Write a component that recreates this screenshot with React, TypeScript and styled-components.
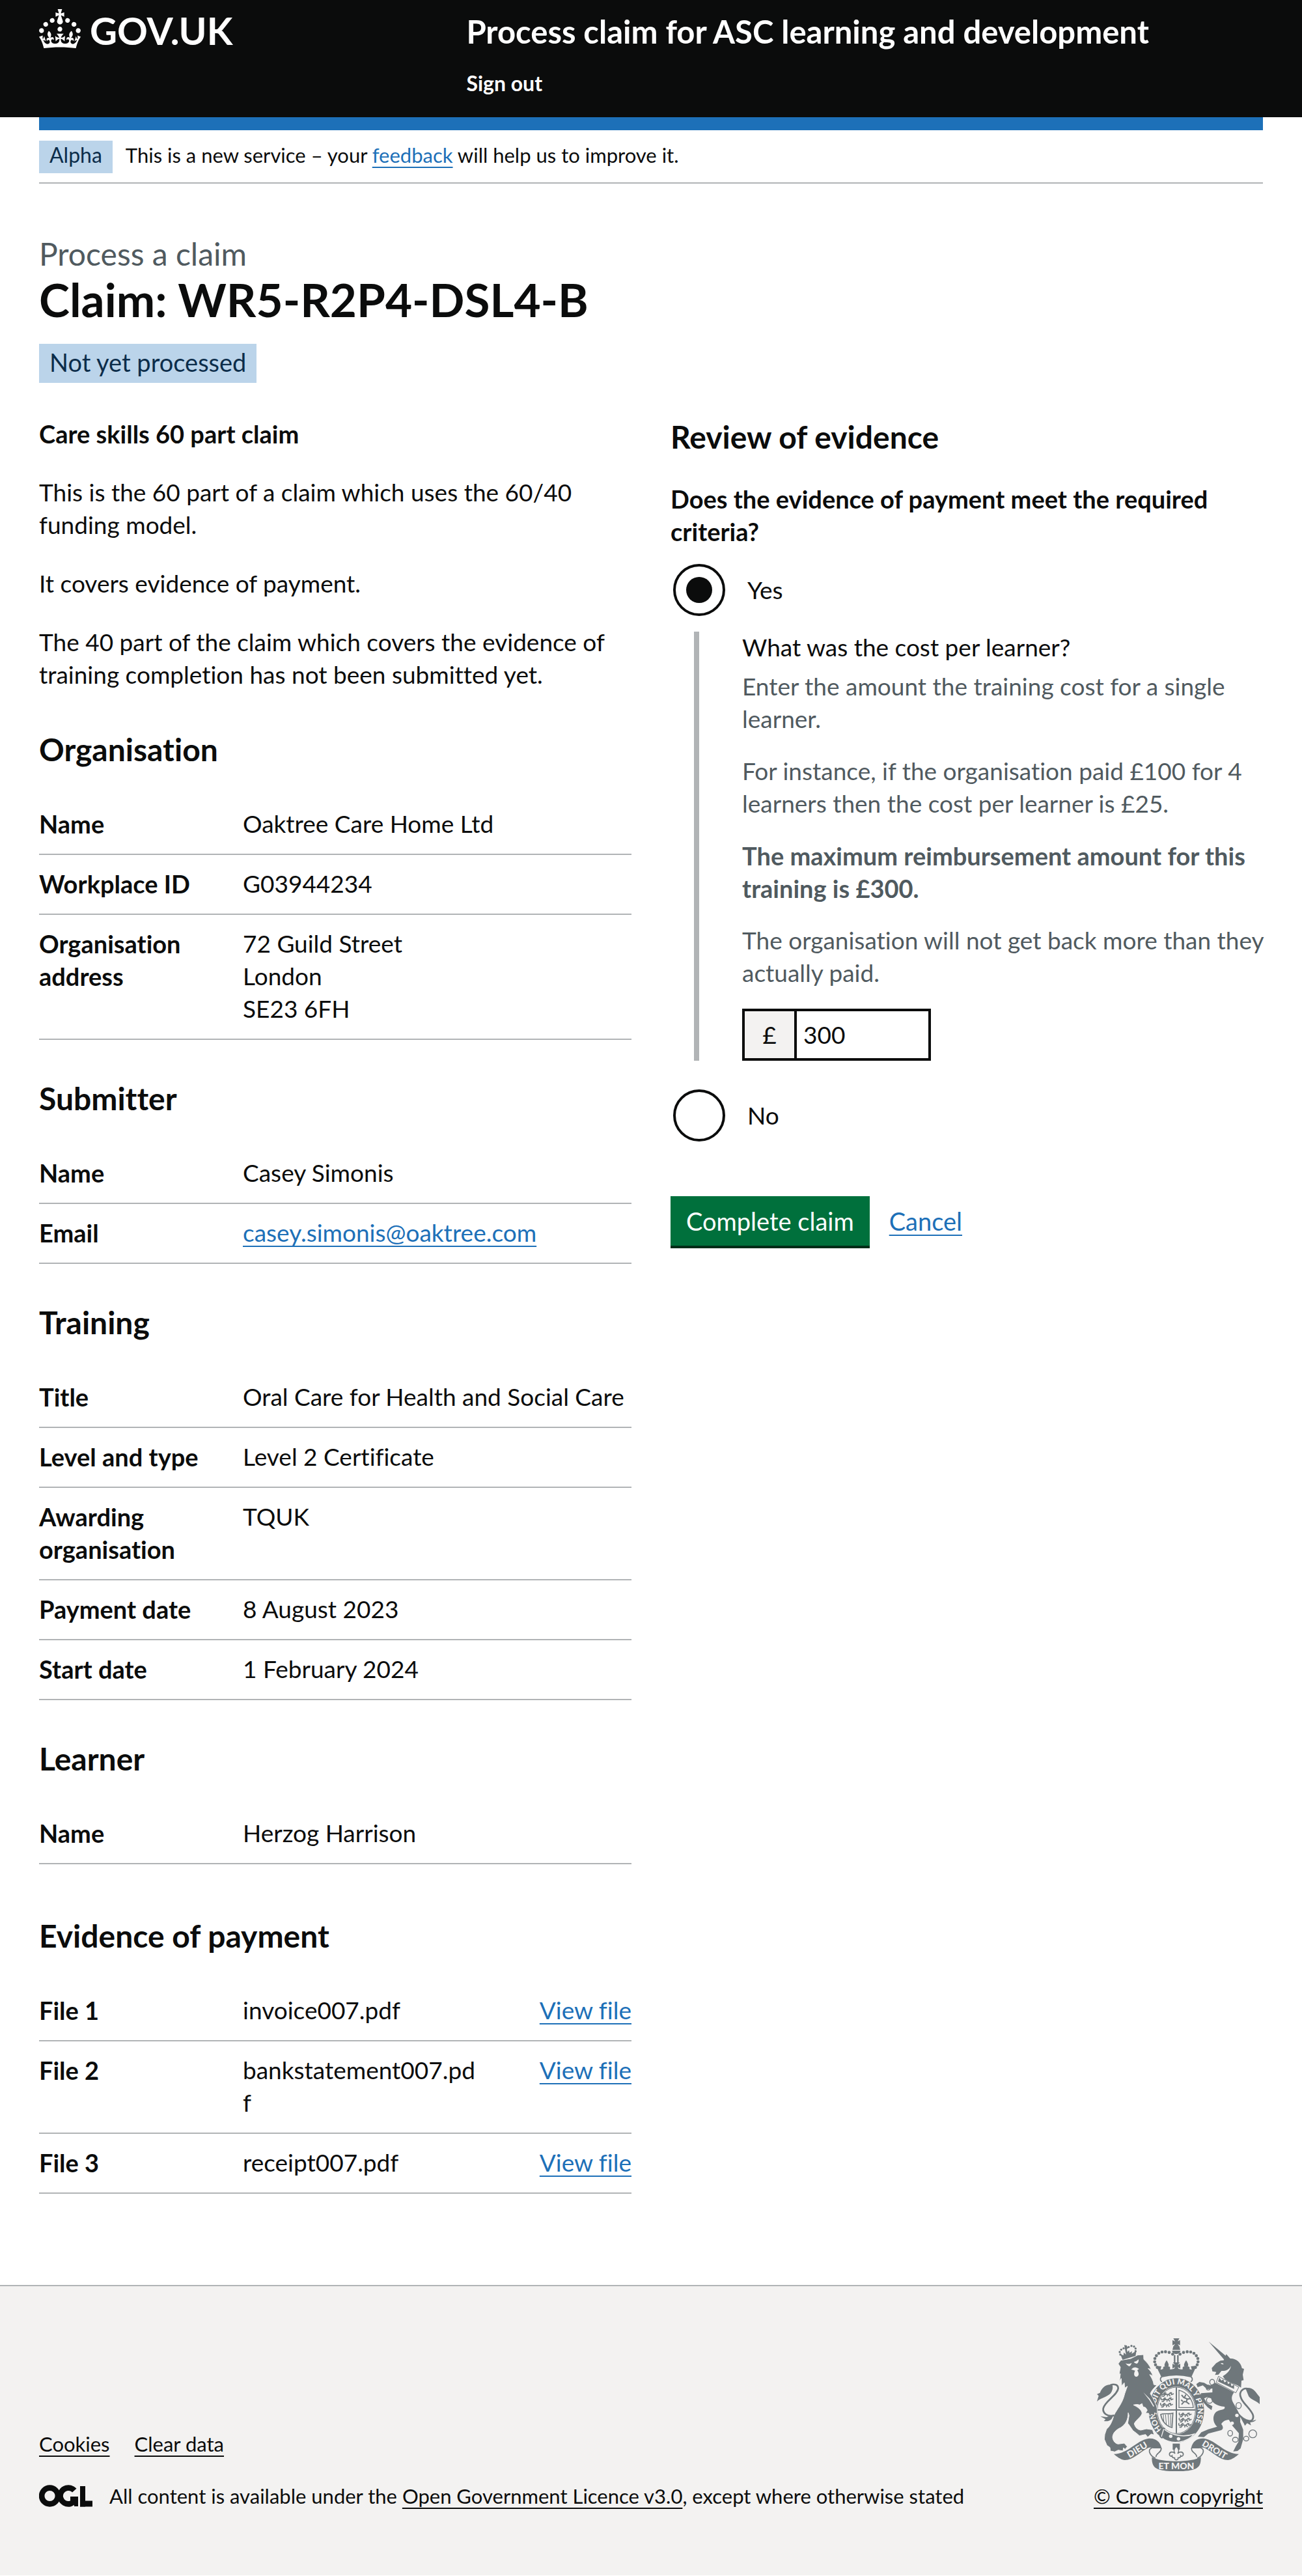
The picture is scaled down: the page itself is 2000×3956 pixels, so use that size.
import React, { useState } from 'react';
import styled, { createGlobalStyle } from 'styled-components';

const color = {
  text: '#0b0c0c',
  secondary: '#505a5f',
  border: '#b1b4b6',
  link: '#1d70b8',
  tagBg: '#bbd4ea',
  tagText: '#0c2d4a',
  panel: '#f3f2f1',
  crest: '#6f777b',
  green: '#00703c',
  greenDark: '#002d18',
  white: '#ffffff',
};

const GlobalStyle = createGlobalStyle`
  * {
    box-sizing: border-box;
  }
  body {
    margin: 0;
    background: ${color.white};
    color: ${color.text};
    font-family: Lato, 'Liberation Sans', sans-serif;
    font-size: 37px;
    line-height: 50px;
    font-variant-ligatures: none;
  }
  button,
  input {
    font: inherit;
    color: inherit;
  }
`;

const Container = styled.div`
  margin: 0 60px;
`;

const Link = styled.a`
  color: ${color.link};
  text-decoration: underline;
  text-decoration-thickness: 2px;
  text-underline-offset: 6px;
  text-decoration-skip-ink: none;
`;

const HeaderBar = styled.header`
  background: ${color.text};
  color: ${color.white};
`;

const HeaderRow = styled(Container)`
  display: flex;
  gap: 36px;
  padding: 14px 0 32px;
`;

const LogoLink = styled.a`
  display: flex;
  flex: 0 0 33%;
  gap: 14px;
  align-self: flex-start;
  align-items: flex-start;
  color: ${color.white};
  font-size: 58px;
  font-weight: 700;
  line-height: 66px;
  text-decoration: none;

  svg {
    display: block;
  }
`;

const ServiceNav = styled.div`
  padding-top: 4px;
`;

const ServiceName = styled.a`
  display: block;
  color: ${color.white};
  font-size: 49px;
  font-weight: 700;
  line-height: 60px;
  text-decoration: none;
`;

const SignOut = styled.a`
  display: block;
  margin-top: 30px;
  color: ${color.white};
  font-size: 32px;
  font-weight: 700;
  line-height: 40px;
  text-decoration: none;
`;

const BlueBar = styled(Container)`
  height: 20px;
  background: ${color.link};
`;

const PhaseBanner = styled(Container)`
  display: flex;
  align-items: baseline;
  gap: 20px;
  padding: 16px 0 14px;
  border-bottom: 2px solid ${color.border};
  font-size: 31px;
  line-height: 40px;
`;

const Tag = styled.strong<{ $small?: boolean }>`
  display: inline-block;
  padding: ${p => (p.$small ? '2px 16px 8px' : '3px 16px 7px')};
  background: ${color.tagBg};
  color: ${color.tagText};
  font-size: ${p => (p.$small ? '32px' : '38px')};
  font-weight: 400;
`;

const Main = styled(Container).attrs({ as: 'main' })`
  padding: 78px 0 140px;
`;

const Caption = styled.span`
  display: block;
  color: ${color.secondary};
  font-size: 48px;
  line-height: 60px;
`;

const Title = styled.h1`
  margin: 0 0 28px;
  font-size: 71px;
  line-height: 80px;
`;

const Columns = styled.div`
  display: grid;
  grid-template-columns: 1fr 1fr;
  gap: 60px;
  align-items: start;
  margin-top: 53px;
`;

const Paragraph = styled.p<{ $strong?: boolean }>`
  margin: 0 0 40px;
  font-size: ${p => (p.$strong ? '38px' : '37px')};
  font-weight: ${p => (p.$strong ? 700 : 400)};

  &:last-of-type {
    margin-bottom: 60px;
  }
`;

const Heading = styled.h2`
  margin: 0 0 40px;
  font-size: 48px;
  line-height: 60px;
`;

const SummaryList = styled.dl<{ $space?: number }>`
  margin: 0 0 ${p => p.$space ?? 60}px;
`;

const SummaryRow = styled.div<{ $action?: boolean }>`
  display: grid;
  grid-template-columns: ${p => (p.$action ? '30% 40% 1fr' : '30% 1fr')};
  column-gap: 40px;
  padding: 19px 0 21px;
  border-bottom: 2px solid ${color.border};
`;

const Key = styled.dt`
  font-size: 38px;
  font-weight: 700;
`;

const Value = styled.dd`
  margin: 0;
  overflow-wrap: anywhere;
`;

const Action = styled.dd`
  margin: 0;
  text-align: right;
  white-space: nowrap;
`;

const Fieldset = styled.fieldset`
  min-width: 0;
  margin: 0;
  padding: 0;
  border: 0;
`;

const Legend = styled.legend`
  margin-bottom: 21px;
  padding: 0;
  font-size: 38px;
  font-weight: 700;
`;

const RadioItem = styled.div`
  display: flex;
  align-items: center;
  height: 88px;
`;

const Radio = styled.input`
  display: grid;
  flex: none;
  place-items: center;
  width: 80px;
  height: 80px;
  margin: 4px;
  border: 4px solid ${color.text};
  border-radius: 50%;
  background: ${color.white};
  appearance: none;

  &:checked::before {
    content: '';
    width: 40px;
    height: 40px;
    border-radius: 50%;
    background: ${color.text};
  }
`;

const RadioLabel = styled.label`
  padding: 0 30px;
`;

const Conditional = styled.div`
  margin: 20px 0 40px 36px;
  padding-left: 66px;
  border-left: 8px solid ${color.border};
`;

const FieldLabel = styled.label`
  display: block;
  margin-bottom: 11px;
  line-height: 48px;
`;

const Hint = styled.div`
  margin: 0 -12px 30px 0;
  color: ${color.secondary};

  p {
    margin: 0 0 30px;
  }
  p:last-child {
    margin-bottom: 0;
  }
`;

const HintStrong = styled.p`
  font-size: 38px;
  font-weight: 700;
`;

const MoneyField = styled.div`
  display: flex;
  width: 290px;
  height: 80px;
  border: 4px solid ${color.text};
`;

const Prefix = styled.span`
  flex: 0 0 80px;
  padding: 11px 0;
  border-right: 4px solid ${color.text};
  background: ${color.panel};
  text-align: center;
`;

const MoneyInput = styled.input`
  flex: 1;
  min-width: 0;
  padding: 0 10px;
  border: 0;
  outline: 0;
  background: ${color.white};
`;

const ButtonRow = styled.div`
  display: flex;
  align-items: baseline;
  gap: 30px;
  margin-top: 80px;
  font-size: 38px;
`;

const Button = styled.button`
  height: 80px;
  padding: 9px 24px;
  border: 0;
  border-bottom: 4px solid ${color.greenDark};
  background: ${color.green};
  color: ${color.white};
`;

const FooterBar = styled.footer`
  padding: 80px 60px 102px;
  border-top: 2px solid ${color.border};
  background: ${color.panel};
  font-size: 31px;
  line-height: 40px;
`;

const FooterRow = styled.div`
  display: flex;
  align-items: flex-end;
  justify-content: space-between;
`;

const FooterLink = styled(Link)`
  color: ${color.text};
`;

const FooterLinks = styled.nav`
  display: flex;
  gap: 38px;
  margin-bottom: 40px;
`;

const Licence = styled.div`
  display: flex;
  align-items: center;
  gap: 26px;
`;

const CrestLink = styled(FooterLink)`
  display: flex;
  flex-direction: column;
  align-items: center;
  gap: 18px;
`;

const CrestText = styled.text`
  fill: ${color.panel};
  font-family: Lato, sans-serif;
  font-weight: 900;
`;

function Crown() {
  return (
    <svg width="64" height="60" viewBox="0 0 32 30" fill="currentColor" aria-hidden="true">
      <path d="M22.6 10.4c-1 .4-2-.1-2.4-1-.4-.9.1-2 1-2.4.9-.4 2 .1 2.4 1s-.1 2-1 2.4m-5.9 6.7c-.9.4-2-.1-2.4-1-.4-.9.1-2 1-2.4.9-.4 2 .1 2.4 1s-.1 2-1 2.4m10.8-3.7c-1 .4-2-.1-2.4-1-.4-.9.1-2 1-2.4.9-.4 2 .1 2.4 1s0 2-1 2.4m3.3 4.8c-1 .4-2-.1-2.4-1-.4-.9.1-2 1-2.4.9-.4 2 .1 2.4 1s-.1 2-1 2.4M17 4.7l2.3 1.2V2.5l-2.3.7-.2-.2.9-3h-3.4l.9 3-.2.2c-.1.1-2.3-.7-2.3-.7v3.4L15 4.7c.1.1.1.2.2.2l-1.3 4c-.1.2-.1.4-.1.6 0 1.1.8 2 1.9 2.2h.7c1-.2 1.9-1.1 1.9-2.1 0-.2 0-.4-.1-.6l-1.3-4c-.1-.2 0-.2.1-.3m-7.6 5.7c.9.4 2-.1 2.4-1 .4-.9-.1-2-1-2.4-.9-.4-2 .1-2.4 1s0 2 1 2.4m-5 3c.9.4 2-.1 2.4-1 .4-.9-.1-2-1-2.4-.9-.4-2 .1-2.4 1s.1 2 1 2.4m-3.2 4.8c.9.4 2-.1 2.4-1 .4-.9-.1-2-1-2.4-.9-.4-2 .1-2.4 1s0 2 1 2.4m14.8 11c4.4 0 8.6.3 12.3.8 1.1-4.5 2.4-7 3.7-8.8l-2.5-.9c.2 1.3.3 1.9 0 2.7-.4-.4-.8-1.1-1.1-2.3l-1.2 4c.7-.5 1.3-.8 2-.9-1.1 2.5-2.6 3.1-3.5 3-1.1-.2-1.7-1.2-1.5-2.1.3-1.2 1.5-1.5 2.1-.1 1.1-2.3-.8-3-2-2.3 1.9-1.9 2.1-3.5.6-5.6-2.1 1.6-2.1 3.2-1.2 5.5-1.2-1.4-3.2-.6-2.5 1.6.9-1.4 2.1-.5 1.9.8-.2 1.1-1.7 2.1-3.5 1.9-2.7-.2-2.9-2.1-2.9-3.6.7-.1 1.9.5 2.9 1.9l.4-4.3c-1.1 1.1-2.1 1.4-3.2 1.4.4-1.2 2.1-3 2.1-3h-5.4s1.7 1.9 2.1 3c-1.1 0-2.1-.2-3.2-1.4l.4 4.3c1-1.4 2.2-2 2.9-1.9-.1 1.5-.2 3.4-2.9 3.6-1.9.2-3.4-.8-3.5-1.9-.2-1.3 1-2.2 1.9-.8.7-2.3-1.2-3-2.5-1.6.9-2.2.9-3.9-1.2-5.5-1.5 2-1.3 3.7.6 5.6-1.2-.7-3.1 0-2 2.3.6-1.4 1.8-1.1 2.1.1.2.9-.3 1.9-1.5 2.1-.9.2-2.4-.5-3.5-3 .6 0 1.2.3 2 .9l-1.2-4c-.3 1.1-.7 1.9-1.1 2.3-.3-.8-.2-1.4 0-2.7l-2.9.9C1.3 23 2.6 25.5 3.7 30c3.7-.5 7.9-.8 12.3-.8" />
    </svg>
  );
}

function LicenceMark() {
  return (
    <svg width="82" height="34" viewBox="0 0 82 34" role="img" aria-label="Open Government Licence">
      <g fill="none" stroke={color.text}>
        <circle cx="16.5" cy="17" r="12.4" strokeWidth="8.6" />
        <circle cx="45" cy="17" r="12.4" strokeWidth="8.6" strokeDasharray="62 16" transform="rotate(30 45 17)" />
        <line x1="48" y1="21" x2="60" y2="21" strokeWidth="6" />
        <line x1="57" y1="20" x2="57" y2="33" strokeWidth="6" />
        <line x1="67" y1="2" x2="67" y2="33.5" strokeWidth="8" />
        <line x1="63" y1="29" x2="82" y2="29" strokeWidth="9" />
      </g>
    </svg>
  );
}

const arch = [
  [601, 168],
  [585, 160],
  [568, 157],
  [552, 158],
  [537, 164],
  [526, 175],
  [519, 188],
  [518, 203],
  [522, 217],
  [530, 229],
];

const lionCrownDots = [
  [360, 170],
  [357, 158],
  [364, 147],
  [375, 141],
  [398, 135],
  [411, 130],
  [423, 133],
  [430, 142],
  [430, 154],
];

const rings = [
  [783, 297, 11, 13],
  [765, 322, 9, 11],
  [771, 380, 14, 14],
  [905, 405, 12, 14],
  [866, 532, 11, 13],
  [890, 562, 13, 11],
  [940, 557, 12, 11],
  [970, 535, 18, 18],
];

function Passant({ x, y }: { x: number; y: number }) {
  return (
    <path
      transform={`translate(${x} ${y})`}
      strokeWidth="5"
      d="M2 2 q-4 12 8 10 M10 12 l8 -8 6 2 M12 10 l22 2 8 -8 8 0 M44 4 l4 8 10 -4 M36 12 l6 8 M18 12 l-6 8 -8 0 M30 14 l-2 7"
    />
  );
}

function RibbonEnd() {
  return (
    <>
      <path d="M330 628C395 628 435 565 488 557C520 554 543 568 550 602L512 602C500 596 492 598 484 602C450 620 420 655 380 656C358 652 344 640 330 628Z" />
      <path
        d="M548 600C552 622 524 622 524 642M508 599C484 606 492 634 522 648"
        fill="none"
        stroke={color.crest}
        strokeWidth="5"
      />
    </>
  );
}

function Crest() {
  return (
    <svg width="250" height="204" viewBox="252 95 750 612" fill={color.crest} aria-hidden="true">
      <defs>
        <path id="garter" d="M618 547A98 120 0 0 1 618 307A98 120 0 0 1 618 547" />
      </defs>

      {/* garter and shield */}
      <ellipse cx="618" cy="427" rx="128" ry="148" />
      <ellipse cx="618" cy="427" rx="91" ry="110" fill={color.panel} />
      <ellipse cx="618" cy="427" rx="88" ry="107" fill="none" stroke={color.crest} strokeWidth="3" />
      <path d="M618 320V532M530 425H706" fill="none" stroke={color.crest} strokeWidth="6" />
      <g fill="none" stroke={color.crest}>
        <Passant x={548} y={342} />
        <Passant x={546} y={366} />
        <Passant x={544} y={391} />
        <Passant x={630} y={436} />
        <Passant x={630} y={460} />
        <Passant x={628} y={484} />
        <path strokeWidth="4" d="M630 334L630 414H696C694 380 672 346 630 334Z" />
        <path strokeWidth="6" d="M642 400l12-14 10 2 4-14-16-6-10-12M664 388l14 10M666 376l18-4M656 366l6-12M648 386l-8-8" />
        <path strokeWidth="5" d="M546 446C560 438 584 446 602 440L598 506C572 500 552 478 546 446Z" />
        <path strokeWidth="3" d="M558 446l2 34M568 446l4 46M580 446l4 52M591 446l2 54" />
      </g>
      <CrestText fontSize="36">
        <textPath href="#garter" startOffset="11%">HONI SOIT QUI MAL Y PENSE</textPath>
      </CrestText>
      <path d="M560 512C600 548 660 550 700 536C670 574 600 590 548 552Z" stroke={color.panel} strokeWidth="4" />
      <circle cx="592" cy="546" r="8" fill={color.panel} />
      <circle cx="628" cy="558" r="8" fill={color.panel} />
      <path d="M566 512c-14-6-24 4-18 16c-10 6-8 22 6 26" fill="none" stroke={color.crest} strokeWidth="6" />

      {/* crown */}
      <path d="M604 95h28l-8 14 11-6v24l-11-6 8 12h-28l8-12-12 6v-24l12 6z" />
      <path d="M604 132h28l4 16h-36zM598 152h39c-2 20-37 20-39 0z" />
      <path d="M610 172v34M625 172v34" stroke={color.crest} strokeWidth="7" />
      {arch.map(([x, y]) => (
        <React.Fragment key={`${x}-${y}`}>
          <circle cx={x} cy={y} r="7" />
          <circle cx={1236 - x} cy={y} r="7" />
        </React.Fragment>
      ))}
      <path d="M602 206h32l-10 12 12-6v22l-12-6 8 14h-28l8-14-12 6v-22l12 6z" />
      <path d="M573 196c12 18 12 26 4 32c8-8 16 0 10 12h-28c-6-12 2-20 10-12c-8-6-8-14 4-32z" />
      <path d="M663 196c12 18 12 26 4 32c8-8 16 0 10 12h-28c-6-12 2-20 10-12c-8-6-8-14 4-32z" />
      <path d="M527 222l22 2-4 16 20-6 28 4 24-4 24 4 28-4 20 6-4-16 24-2c-4 18-14 32-21 50c-44-12-96-12-140 0c-7-18-17-32-21-50z" />
      <path
        d="M552 272c42-11 90-11 132 0c10 4 10 20 0 22M552 272c-10 4-10 20 0 22"
        fill="none"
        stroke={color.crest}
        strokeWidth="5"
      />

      {/* lion */}
      <g stroke={color.panel} strokeWidth="3">
        <path d="M350 212l12-16 46-8 32-16 27-2 1 22C482 205 494 218 502 238l-14-4C498 244 507 256 509 268l-14-6C503 275 513 292 514 308l14 3C516 322 502 338 498 350l12 20 12 26C530 412 532 428 528 444l-10-6-2 14-11-7-10 8-5-13h-14l8-14-8-12-12-4-4-14-12 6C438 398 430 400 420 402C438 410 458 424 460 440C458 456 432 470 424 488C428 506 440 516 454 518l26-6 28 4 8 24-14-4-16 14-10-12-28 6-14-12-16-12-18-26-6-8 6-36-4-12C396 470 384 492 362 506C340 516 326 530 324 550C326 568 336 580 350 582l28-4 14 16-10 12-8-6-2 14-22-4-16 8-20-4-2-16-14-10-12-28 2-22 8-24C312 500 322 480 330 450C345 420 370 395 380 350l12-34-12 8-2-24-12 14-2-34-8 14 4-36-6 4 6-34z" />
      </g>
      <g fill={color.panel}>
        <path d="M384 210q14 6 28-2q-4 14-12 16q-10-4-16-14zM422 204q12-2 22-12q2 14-8 20q-10 0-14-8z" />
        <path d="M410 238q16-18 36-2l-8 6c8 14 10 26-4 30c-14-2-12-18-6-28z" />
        <path d="M466 344l30 30 20 34-4 2-18-30z" />
      </g>
      <path d="M332 450C300 458 278 440 281 418C288 384 346 358 350 326C350 308 332 304 314 310" fill="none" stroke={color.crest} strokeWidth="8" />
      <path d="M322 308C288 306 274 326 266 346l-14 6 8 8-8 26C272 366 310 364 320 340C326 326 326 318 322 308zM268 454l28 4 30-10c-2 24-20 32-42 28l8-8z" />
      {lionCrownDots.map(([x, y]) => (
        <circle key={`${x}-${y}`} cx={x} cy={y} r="5" />
      ))}
      <path d="M378 126l12 2 2 8 8 2-10 6 2 14 8-8 2 12 12-8-2 12 22-14-4 24-60 18-10-26 14 6 2-14 10 10z" />

      {/* unicorn */}
      <path d="M767 110L856 184l-14 14z" />
      <path d="M836 196l12-28 18 20C892 186 916 206 920 232l10 4-6 26 4 26-10 2-2 32-16-10-30-12-28-16-10-14C850 258 866 245 870 222C858 244 842 246 826 245l-14 17-16 2 6-14-18-3-3-15 20-22 20-12z" />
      <path d="M822 210q10-4 14 4q-8 4-14-4z" fill={color.panel} />
      <path d="M812 270L906 320l-14 26L802 298z" fill={color.panel} stroke={color.crest} strokeWidth="3" />
      <path d="M810 294l6-18 10 14 8-6 6 14 12-8 4 16 12-8 4 18 12-8 0 20z" />
      <path d="M798 300L884 344C868 365 872 380 885 400C902 430 916 450 912 480l14 36v44l-12 42-14 12-20 2 12-24 12-20 2-40-28-32-18-30C842 472 832 478 825 490C834 500 836 512 825 518l-60 16-20 16-28-2 16-20 32-14 41-12C782 480 785 444 805 432C826 420 846 426 840 410C804 408 782 392 778 372l-18-6-14 6 14 22 24 14-4 18-18-14-20-22-16-24 6-18 52-4 0-18-24 4-20-18-24 8-6-14 14-10 22 4 24 14z" />
      <path d="M904 444C935 480 976 488 972 452C966 420 910 388 912 350C916 330 934 322 950 328" fill="none" stroke={color.crest} strokeWidth="8" />
      <path d="M936 324C974 318 984 345 1002 366v32C984 380 954 378 948 354zM912 452c14 22 40 30 74 18c-8 10-20 12-28 12l4 14-18-10-10 12c-6-16-16-26-22-46z" />
      <g fill="none" stroke={color.crest} strokeWidth="4">
        {rings.map(([cx, cy, rx, ry]) => (
          <ellipse key={`${cx}-${cy}`} cx={cx} cy={cy} rx={rx} ry={ry} />
        ))}
      </g>
      <circle cx="897" cy="450" r="8" fill={color.panel} />
      <circle cx="875" cy="486" r="8" fill={color.panel} />

      {/* ribbon */}
      <path d="M601 580h33v28h-33z" />
      <path
        d="M618 592c14 14 12 26 6 34c10-12 26-8 26 4c0 8-8 10-12 6c0 8-6 10-12 10c2 12-18 12-16 0c-6 0-12-2-12-10c-4 4-12 2-12-6c0-12 16-16 26-4c-6-8-8-20 6-34z"
        fill={color.panel}
        stroke={color.crest}
        strokeWidth="5"
      />
      <RibbonEnd />
      <g transform="translate(1236 0) scale(-1 1)">
        <RibbonEnd />
      </g>
      <path d="M505 642C545 668 691 668 731 642C731 690 720 707 618 708C516 707 505 690 505 642Z" />
      <CrestText fontSize="42" textAnchor="middle" x="618" y="699">ET MON</CrestText>
      <CrestText fontSize="42" textAnchor="middle" transform="translate(445 621) rotate(-31)">DIEU</CrestText>
      <CrestText fontSize="40" textAnchor="middle" transform="translate(787 620) rotate(31)">DROIT</CrestText>
    </svg>
  );
}

type Row = { label: string; value: React.ReactNode; file?: boolean };

function Summary({ title, rows, space }: { title: string; rows: Row[]; space?: number }) {
  return (
    <section>
      <Heading>{title}</Heading>
      <SummaryList $space={space}>
        {rows.map(row => (
          <SummaryRow key={row.label} $action={row.file}>
            <Key>{row.label}</Key>
            <Value>{row.value}</Value>
            {row.file && (
              <Action>
                <Link href="#file">View file</Link>
              </Action>
            )}
          </SummaryRow>
        ))}
      </SummaryList>
    </section>
  );
}

const organisation: Row[] = [
  { label: 'Name', value: 'Oaktree Care Home Ltd' },
  { label: 'Workplace ID', value: 'G03944234' },
  {
    label: 'Organisation address',
    value: (
      <>
        72 Guild Street
        <br />
        London
        <br />
        SE23 6FH
      </>
    ),
  },
];

const submitter: Row[] = [
  { label: 'Name', value: 'Casey Simonis' },
  { label: 'Email', value: <Link href="#email">casey.simonis@oaktree.com</Link> },
];

const training: Row[] = [
  { label: 'Title', value: 'Oral Care for Health and Social Care' },
  { label: 'Level and type', value: 'Level 2 Certificate' },
  { label: 'Awarding organisation', value: 'TQUK' },
  { label: 'Payment date', value: '8 August 2023' },
  { label: 'Start date', value: '1 February 2024' },
];

const learner: Row[] = [{ label: 'Name', value: 'Herzog Harrison' }];

const files: Row[] = [
  { label: 'File 1', value: 'invoice007.pdf', file: true },
  { label: 'File 2', value: 'bankstatement007.pdf', file: true },
  { label: 'File 3', value: 'receipt007.pdf', file: true },
];

function ReviewForm() {
  const [answer, setAnswer] = useState('yes');
  const [cost, setCost] = useState('300');
  return (
    <form onSubmit={e => e.preventDefault()}>
      <Heading>Review of evidence</Heading>
      <Fieldset>
        <Legend>Does the evidence of payment meet the required criteria?</Legend>
        <RadioItem>
          <Radio type="radio" id="yes" name="criteria" checked={answer === 'yes'} onChange={() => setAnswer('yes')} />
          <RadioLabel htmlFor="yes">Yes</RadioLabel>
        </RadioItem>
        {answer === 'yes' && (
          <Conditional>
            <FieldLabel htmlFor="cost">What was the cost per learner?</FieldLabel>
            <Hint id="cost-hint">
              <p>Enter the amount the training cost for a single learner.</p>
              <p>For instance, if the organisation paid £100 for 4 learners then the cost per learner is £25.</p>
              <HintStrong>The maximum reimbursement amount for this training is £300.</HintStrong>
              <p>The organisation will not get back more than they actually paid.</p>
            </Hint>
            <MoneyField>
              <Prefix aria-hidden="true">£</Prefix>
              <MoneyInput
                id="cost"
                type="text"
                inputMode="decimal"
                aria-describedby="cost-hint"
                value={cost}
                onChange={e => setCost(e.target.value)}
              />
            </MoneyField>
          </Conditional>
        )}
        <RadioItem>
          <Radio type="radio" id="no" name="criteria" checked={answer === 'no'} onChange={() => setAnswer('no')} />
          <RadioLabel htmlFor="no">No</RadioLabel>
        </RadioItem>
      </Fieldset>
      <ButtonRow>
        <Button type="submit">Complete claim</Button>
        <Link href="#cancel">Cancel</Link>
      </ButtonRow>
    </form>
  );
}

export default function App() {
  return (
    <>
      <GlobalStyle />
      <HeaderBar>
        <HeaderRow>
          <LogoLink href="#home">
            <Crown />
            GOV.UK
          </LogoLink>
          <ServiceNav>
            <ServiceName href="#service">Process claim for ASC learning and development</ServiceName>
            <SignOut href="#sign-out">Sign out</SignOut>
          </ServiceNav>
        </HeaderRow>
      </HeaderBar>
      <BlueBar />
      <PhaseBanner>
        <Tag $small>Alpha</Tag>
        <span>
          This is a new service – your <Link href="#feedback">feedback</Link> will help us to improve it.
        </span>
      </PhaseBanner>
      <Main>
        <Caption>Process a claim</Caption>
        <Title>Claim: WR5-R2P4-DSL4-B</Title>
        <Tag>Not yet processed</Tag>
        <Columns>
          <div>
            <Paragraph $strong>Care skills 60 part claim</Paragraph>
            <Paragraph>This is the 60 part of a claim which uses the 60/40 funding model.</Paragraph>
            <Paragraph>It covers evidence of payment.</Paragraph>
            <Paragraph>
              The 40 part of the claim which covers the evidence of training completion has not been submitted yet.
            </Paragraph>
            <Summary title="Organisation" rows={organisation} />
            <Summary title="Submitter" rows={submitter} />
            <Summary title="Training" rows={training} />
            <Summary title="Learner" rows={learner} space={80} />
            <Summary title="Evidence of payment" rows={files} space={0} />
          </div>
          <ReviewForm />
        </Columns>
      </Main>
      <FooterBar>
        <FooterRow>
          <div>
            <FooterLinks>
              <FooterLink href="#cookies">Cookies</FooterLink>
              <FooterLink href="#clear">Clear data</FooterLink>
            </FooterLinks>
            <Licence>
              <LicenceMark />
              <span>
                All content is available under the <FooterLink href="#licence">Open Government Licence v3.0</FooterLink>,
                except where otherwise stated
              </span>
            </Licence>
          </div>
          <CrestLink href="#copyright">
            <Crest />
            <span>© Crown copyright</span>
          </CrestLink>
        </FooterRow>
      </FooterBar>
    </>
  );
}
